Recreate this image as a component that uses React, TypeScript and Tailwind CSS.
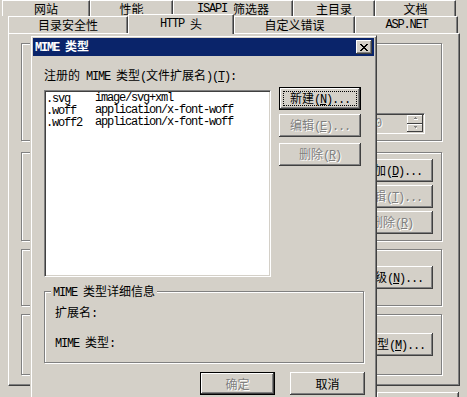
import React from "react";

const ASCII = /^[\x20-\x7e]+$/;

// "&N" -> underlined N (accelerator key)
function acc(p: string) {
  return p
    .split(/(&.)/)
    .filter(Boolean)
    .map((q, i) =>
      q.length === 2 && q[0] === "&" ? (
        <u key={i} className="underline-offset-[1px]">
          {q[1]}
        </u>
      ) : (
        <React.Fragment key={i}>{q}</React.Fragment>
      )
    );
}

// half-width runs get a 6px mono cell, CJK stays 12px
function T({ s }: { s: string }) {
  return (
    <>
      {s
        .split(/([\x20-\x7e]+)/)
        .filter(Boolean)
        .map((p, i) =>
          ASCII.test(p) ? (
            <span key={i} className="font-['Liberation_Mono',monospace] tracking-[-1.2px] whitespace-pre">
              {acc(p)}
            </span>
          ) : (
            <span key={i}>{p}</span>
          )
        )}
    </>
  );
}

type BtnProps = { s: string; w: string; def?: boolean; focus?: boolean; off?: boolean; className?: string };

function Btn({ s, w, def, focus, off, className = "" }: BtnProps) {
  return (
    <div
      className={`relative flex h-[23px] shrink-0 items-center justify-center overflow-hidden whitespace-nowrap bg-[#d4d0c8] ${w} ${
        def
          ? "border border-black shadow-[inset_-1px_-1px_#404040,inset_1px_1px_#fff,inset_-2px_-2px_#808080]"
          : "shadow-[inset_-1px_-1px_#404040,inset_1px_1px_#fff,inset_-2px_-2px_#808080]"
      } ${off ? "text-[#808080] [text-shadow:1px_1px_0_#fff]" : "text-black"} ${className}`}
    >
      <span>
        <T s={s} />
      </span>
      {focus && <span className="absolute inset-[3px] border border-dotted border-black" />}
    </div>
  );
}

const Tab = ({ s, w }: { s: string; w: string }) => (
  <div
    className={`flex h-full items-center justify-center border-t border-l border-white border-r border-r-[#404040] shadow-[inset_-1px_0_#808080] ${w}`}
  >
    <T s={s} />
  </div>
);

const Arrow = ({ up }: { up?: boolean }) => (
  <svg width="7" height="4" viewBox="0 0 7 4">
    <path d={up ? "M3 0h1v1h1v1H2V1h1z" : "M2 0h3v1H4v1H3V1H2z"} fill="#808080" />
    <path d={up ? "M2 2h4v1H2z" : "M4 2h1v1H4z"} fill="#fff" />
  </svg>
);

const CloseX = () => (
  <svg width="8" height="7" viewBox="0 0 8 7" fill="#000">
    <path d="M0 0h2v1H0zM6 0h2v1H6zM1 1h2v1H1zM5 1h2v1H5zM2 2h4v1H2zM3 3h2v1H3zM2 4h4v1H2zM1 5h2v1H1zM5 5h2v1H5zM0 6h2v1H0zM6 6h2v1H6z" />
  </svg>
);

const groupBox = "border border-[#808080] shadow-[1px_1px_0_#fff,inset_1px_1px_0_#fff]";
const sunken =
  "border border-t-[#808080] border-l-[#808080] border-r-white border-b-white shadow-[inset_1px_1px_#404040,inset_-1px_-1px_#d4d0c8]";

const mimeRows = [
  [".svg", "image/svg+xml"],
  [".woff", "application/x-font-woff"],
  [".woff2", "application/x-font-woff"],
];

function PropertySheet() {
  return (
    <div className="flex flex-col">
      {/* tab row 1 (back) */}
      <div className="flex h-[16px] pl-[2px]">
        <Tab s="网站" w="w-[88px]" />
        <Tab s="性能" w="w-[83px]" />
        <Tab s="ISAPI 筛选器" w="w-[120px]" />
        <Tab s="主目录" w="w-[82px]" />
        <Tab s="文档" w="w-[81px]" />
      </div>
      {/* tab row 2 (front) */}
      <div className="flex h-[17px] items-end pl-[8px]">
        <Tab s="目录安全性" w="w-[120px]" />
        <div className="relative z-10 -mb-[1px] flex h-[20px] w-[106px] items-center justify-center border-t border-l border-white border-r border-r-[#404040] bg-[#d4d0c8] pb-[2px] shadow-[inset_-1px_0_#808080]">
          <T s="HTTP 头" />
        </div>
        <Tab s="自定义错误" w="w-[121px]" />
        <Tab s="ASP.NET" w="w-[103px]" />
      </div>

      {/* tab page */}
      <div className="ml-[8px] flex h-[353px] w-[452px] flex-col border border-white border-r-[#404040] border-b-[#404040] pt-[9px] pl-[12px] shadow-[inset_-1px_-1px_#808080]">
        <div className={`flex h-[98px] w-[421px] items-end justify-end pr-[16px] pb-[6px] ${groupBox}`}>
          <div className={`flex h-[21px] w-[70px] items-center justify-between pl-[7px] pr-[1px] text-[#808080] [text-shadow:1px_1px_0_#fff] ${sunken}`}>
            <T s="100" />
            <div className="flex h-[17px] w-[16px] flex-col">
              <div className="flex flex-1 items-center justify-center bg-[#d4d0c8] shadow-[inset_-1px_-1px_#404040,inset_1px_1px_#fff]">
                <Arrow up />
              </div>
              <div className="flex flex-1 items-center justify-center bg-[#d4d0c8] shadow-[inset_-1px_-1px_#404040,inset_1px_1px_#fff]">
                <Arrow />
              </div>
            </div>
          </div>
        </div>

        <div className={`mt-[11px] flex h-[89px] w-[421px] flex-col items-end gap-[3px] pt-[6px] pr-[8px] ${groupBox}`}>
          <Btn s="添加(&D)..." w="w-[82px]" />
          <Btn s="编辑(&T)..." w="w-[82px]" off />
          <Btn s="删除(&R)" w="w-[82px]" off />
        </div>

        <div className={`mt-[8px] flex h-[57px] w-[421px] flex-col items-end pt-[16px] pr-[8px] ${groupBox}`}>
          <Btn s="编辑分级(&N)..." w="w-[104px]" />
        </div>

        <div className={`mt-[8px] flex h-[61px] w-[421px] flex-col items-end pt-[18px] pr-[8px] ${groupBox}`}>
          <Btn s="MIME 类型(&M)..." w="w-[106px]" />
        </div>
      </div>

      {/* sheet buttons */}
      <div className="mt-[6px] flex justify-end gap-[6px] pr-[8px]">
        <Btn s="确定" w="w-[82px]" />
        <Btn s="取消" w="w-[82px]" />
        <Btn s="帮助" w="w-[82px]" />
      </div>
    </div>
  );
}

function MimeDialog() {
  return (
    <div className="absolute top-[35px] left-[30px] flex h-[372px] w-[347px] flex-col border border-[#d4d0c8] border-r-[#404040] border-b-[#404040] bg-[#d4d0c8] p-[2px] shadow-[inset_1px_1px_#fff,inset_-1px_-1px_#808080]">
      {/* title bar */}
      <div className="flex h-[18px] items-center justify-between bg-[#0a246a] pl-[2px] pr-[2px]">
        <span className="font-bold text-white">
          <T s="MIME 类型" />
        </span>
        <div className="flex h-[14px] w-[16px] items-center justify-center bg-[#d4d0c8] shadow-[inset_-1px_-1px_#404040,inset_1px_1px_#fff,inset_-2px_-2px_#808080]">
          <CloseX />
        </div>
      </div>

      <div className="flex flex-col pl-[11px] pr-[9px]">
        <div className="mt-[12px] leading-[14px]">
          <T s="注册的 MIME 类型(文件扩展名)(&T):" />
        </div>

        <div className="mt-[3px] flex gap-[8px]">
          <div className={`mt-[3px] h-[187px] w-[227px] bg-white pt-[1px] pl-[1px] ${sunken}`}>
            {mimeRows.map(([ext, type]) => (
              <div key={ext} className="flex h-[12px] items-center leading-[12px]">
                <div className="w-[49px]">
                  <T s={ext} />
                </div>
                <T s={type} />
              </div>
            ))}
          </div>
          <div className="flex flex-col">
            <Btn s="新建(&N)..." w="w-[82px]" def focus />
            <Btn s="编辑(&E)..." w="w-[82px]" off className="mt-[4px]" />
            <Btn s="删除(&R)" w="w-[82px]" off className="mt-[6px]" />
          </div>
        </div>

        <div className={`relative mt-[14px] flex h-[72px] w-[320px] flex-col pt-[13px] pl-[10px] ${groupBox}`}>
          <span className="absolute -top-[8px] left-[6px] bg-[#d4d0c8] px-[2px] leading-[14px]">
            <T s="MIME 类型详细信息" />
          </span>
          <div className="leading-[14px]">
            <T s="扩展名:" />
          </div>
          <div className="mt-[14px] leading-[14px]">
            <T s="MIME 类型:" />
          </div>
        </div>

        <div className="mt-[9px] flex justify-end gap-[15px]">
          <Btn s="确定" w="w-[75px]" def off />
          <Btn s="取消" w="w-[75px]" />
        </div>
      </div>
    </div>
  );
}

export default function App() {
  return (
    <div className="relative h-[397px] w-[467px] overflow-hidden bg-[#d4d0c8] font-['Noto_Sans_CJK_SC',sans-serif] text-[12px] leading-[14px] text-black">
      <PropertySheet />
      <MimeDialog />
    </div>
  );
}
